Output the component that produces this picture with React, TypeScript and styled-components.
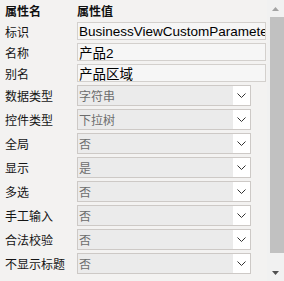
import React from "react";
import styled, { createGlobalStyle } from "styled-components";

const Global = createGlobalStyle`
  html, body { margin: 0; padding: 0; background: #f3f2f1; }
  body { width: 284px; height: 281px; overflow: hidden; }
`;

const Page = styled.div`
  display: flex;
  width: 284px;
  height: 281px;
  background: #f3f2f1;
  font-family: "Liberation Sans", "Noto Sans CJK SC", sans-serif;
  color: #111;
`;

const Grid = styled.div`
  flex: 1;
  display: grid;
  grid-template-columns: 72px 1fr;
  grid-auto-rows: min-content;
  row-gap: 3px;
  padding: 0 1px 0 5px;
  align-content: start;
`;

const HeaderCell = styled.div`
  height: 19px;
  display: flex;
  align-items: center;
  padding-top: 2px;
  box-sizing: border-box;
  font-family: "Noto Sans CJK SC", sans-serif;
  font-weight: 700;
  font-size: 12px;
`;

const Label = styled.div<{ $tall?: boolean }>`
  height: ${(p) => (p.$tall ? 21 : 18)}px;
  display: flex;
  align-items: center;
  font-family: "Noto Sans CJK SC", sans-serif;
  font-size: 12px;
  white-space: nowrap;
  color: #151515;
`;

const TextBox = styled.div`
  height: 18px;
  box-sizing: border-box;
  border: 1px solid #d3d0cd;
  background: #f6f6f6;
  padding: 0 0 0 1px;
  display: flex;
  align-items: center;
  overflow: hidden;
  white-space: nowrap;
  font-family: "Liberation Sans", "Noto Sans CJK SC", sans-serif;
  font-size: 13.5px;
  color: #000;
`;

const SelectBox = styled.div`
  height: 21px;
  width: 174px;
  box-sizing: border-box;
  border: 1px solid #cdc9c6;
  background: #ebebeb;
  display: flex;
  align-items: stretch;
`;

const SelectValue = styled.div`
  flex: 1;
  display: flex;
  align-items: center;
  padding-left: 1px;
  font-family: "Noto Sans CJK SC", sans-serif;
  font-size: 12px;
  color: #6d6d6d;
`;

const Chevron = styled.div`
  width: 17px;
  background: #fff;
  display: flex;
  align-items: center;
  justify-content: center;
`;

const Scrollbar = styled.div`
  width: 17px;
  display: flex;
  flex-direction: column;
  background: #f1f1f1;
`;

const ScrollBtn = styled.div`
  height: 17px;
  display: flex;
  align-items: center;
  justify-content: center;
`;

const Track = styled.div`
  flex: 1;
  display: flex;
  flex-direction: column;
`;

const Thumb = styled.div`
  height: 236px;
  margin: 0 0 0 3px;
  background: #c1c1c1;
`;

const rows: [string, string][] = [
  ["数据类型", "字符串"],
  ["控件类型", "下拉树"],
  ["全局", "否"],
  ["显示", "是"],
  ["多选", "否"],
  ["手工输入", "否"],
  ["合法校验", "否"],
  ["不显示标题", "否"],
];

const ChevronIcon = () => (
  <svg width="9" height="5" viewBox="0 0 9 5">
    <path d="M0.5 0.5 L4.5 4.5 L8.5 0.5" fill="none" stroke="#333" strokeWidth="1" />
  </svg>
);

export default function App() {
  return (
    <>
      <Global />
      <Page>
        <Grid>
          <HeaderCell>属性名</HeaderCell>
          <HeaderCell>属性值</HeaderCell>
          <Label>标识</Label>
          <TextBox>BusinessViewCustomParameter</TextBox>
          <Label>名称</Label>
          <TextBox>产品2</TextBox>
          <Label>别名</Label>
          <TextBox>产品区域</TextBox>
          {rows.map(([k, v]) => (
            <React.Fragment key={k}>
              <Label $tall>{k}</Label>
              <SelectBox>
                <SelectValue>{v}</SelectValue>
                <Chevron>
                  <ChevronIcon />
                </Chevron>
              </SelectBox>
            </React.Fragment>
          ))}
        </Grid>
        <Scrollbar>
          <ScrollBtn>
            <svg width="7" height="4" viewBox="0 0 7 4">
              <path d="M3.5 0 L7 4 L0 4 Z" fill="#a3a3a3" />
            </svg>
          </ScrollBtn>
          <Track>
            <Thumb />
          </Track>
          <ScrollBtn>
            <svg width="7" height="4" viewBox="0 0 7 4">
              <path d="M0 0 L7 0 L3.5 4 Z" fill="#505050" />
            </svg>
          </ScrollBtn>
        </Scrollbar>
      </Page>
    </>
  );
}
